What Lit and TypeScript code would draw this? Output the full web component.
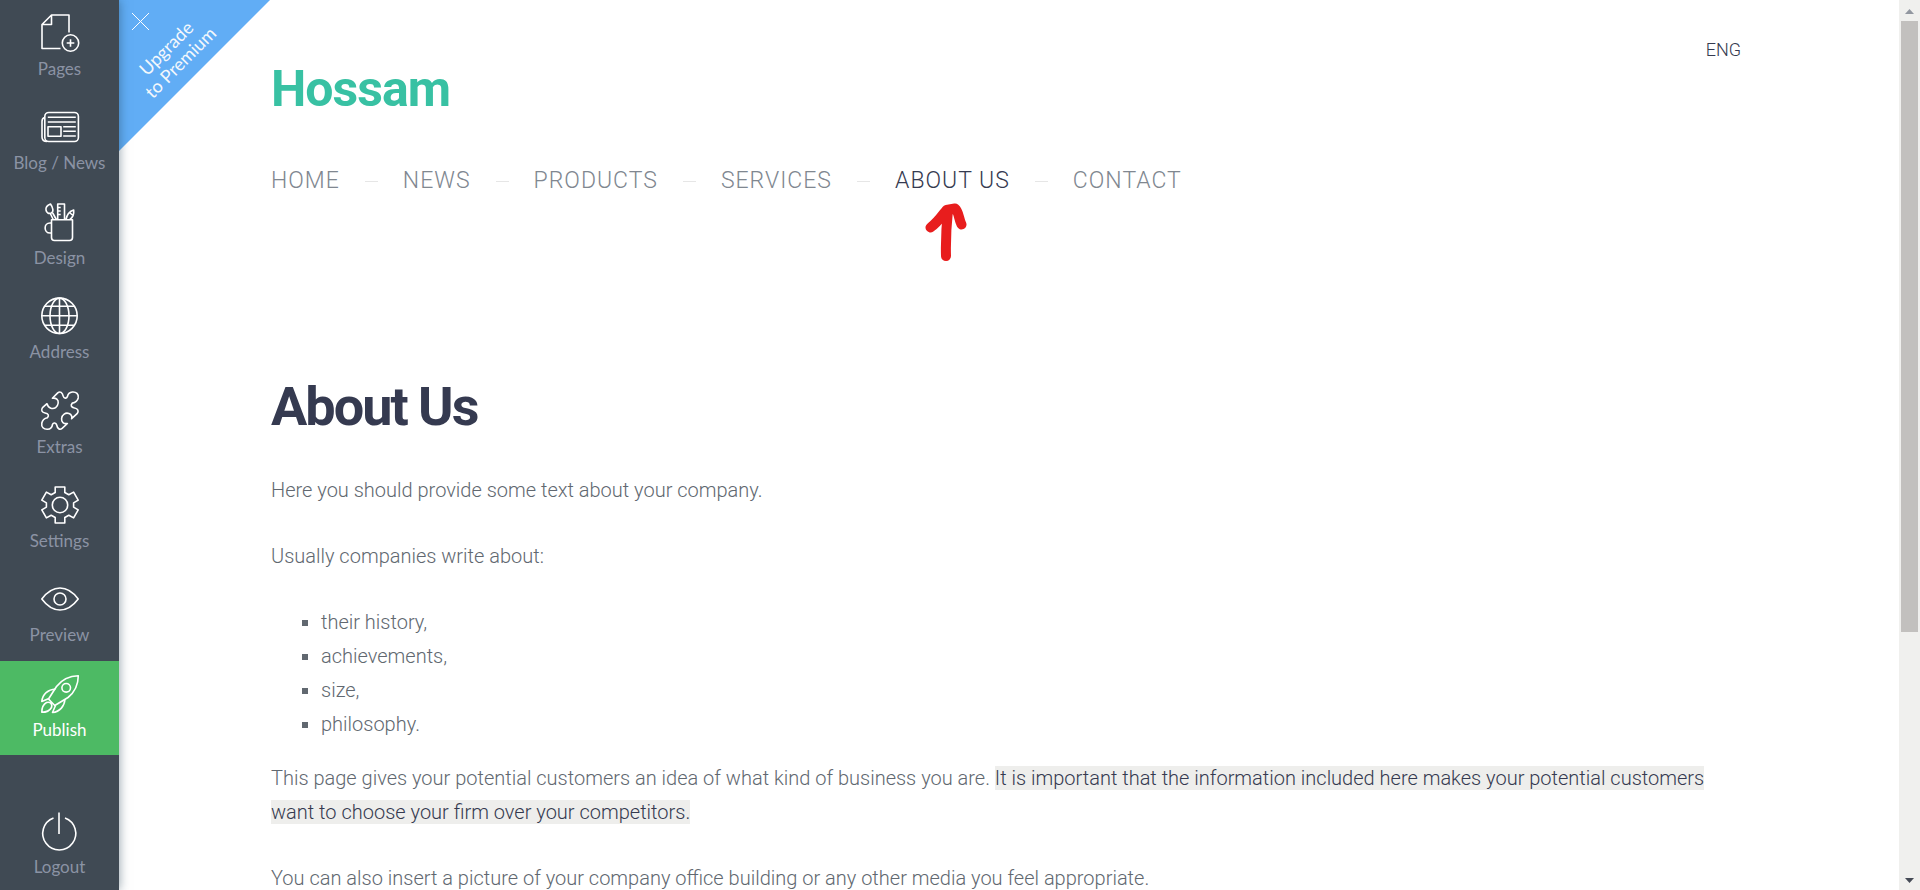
import { LitElement, html, css, svg } from "lit";
import { customElement } from "lit/decorators.js";
import { classMap } from "lit/directives/class-map.js";

const icons = {
  pages: svg`<path d="M19.5 34.5H1V10.5L10.5 1H28V18.5M10.5 1V10.5H1"/><circle cx="29.5" cy="29" r="8.2"/><path d="M29.5 25.2v7.6M25.7 29h7.6"/>`,
  news: svg`<rect x="3.8" y="4.5" width="33.6" height="29" rx="4"/><path d="M3.8 9.5C1.8 10 1 11.3 1 13.5V29c0 3 1.6 4.5 5 4.5M6.8 9.3h28M6.8 14h28M22.2 18.7h12.6M22.2 23.3h12.6M22.2 28h12.6"/><rect x="7" y="18.7" width="13" height="9.6"/>`,
  design: svg`<path d="M10.5 16.7h21v17.8c0 2-1 3-3 3h-15c-2 0-3-1-3-3zM10.500 20H9c-6.500 0-6.500 10 0 10h1.500M16.700 16.500V1h6.800v15.500M16.700 4.500h3M16.700 8h3M16.700 11.500h3M9.500 1C6.500 2.200 4.600 4.500 5 7c.4 2.800 2.800 4 5.300 3C13 8.800 12 4.500 9.500 1zM9.300 10.500l2.900 6M11.700 10l3.600 6.500M25 16.500c1-5 3.500-8.300 7.700-9.500.4 3.800-.8 7.300-3.800 9.500M28.500 9.500l3.500 3"/>`,
  address: svg`<circle cx="18.500" cy="18.800" r="17.700"/><ellipse cx="18.500" cy="18.800" rx="9.500" ry="17.700"/><path d="M18.500 1.100v35.400M.8 18.800h35.400M4 9.300h29M4 28.300h29"/>`,
  extras: svg`<path d="M6 11.700L1.500 15.600C-.2 18 .8 20.500 4 21c3.500.5 4.300 2.500 2.400 4.800C3.500 26.400 1.500 28 .8 31c-.7 4 2 6.500 5.700 6.300 3-.2 4.700-2.300 5-5 1-2 3.500-1.600 4.200.7.600 3.400 3 5.500 5.400 3.400l5.300-4.900c-3.800.6-6.200-1.500-5.800-5 .5-4 3.800-6.200 7.400-5 2.700 1 3.300 3.500 2.600 5.200l5.500-5c2-2.700.9-5.100-2.600-5.700-3.400-.7-4.200-2.700-2.200-4.900 3-.5 5.200-2.200 5.900-5.100.8-4-2-6.300-5.800-6-2.900.3-4.600 2.200-5 4.700-1 2.200-3.600 1.800-4.200-.6-.7-3.400-3-5.400-5.500-3.200L11.400 6.200c3.700-.6 6.200 1.500 5.800 4.800-.5 4-3.800 6.400-7.400 5.200-2.400-.8-3.300-2.700-3.800-4.500z"/>`,
  settings: svg`<circle cx="19" cy="19" r="7.700"/><path d="M14.200 1h9.600v5.500l4 2.300 4.800-2.700 4.600 8-4.600 2.800v4.200l4.600 2.800-4.600 8-4.800-2.700-4 2.300V37h-9.600v-5.500l-4-2.300-4.800 2.700-4.600-8 4.600-2.800v-4.200L.8 14.100l4.600-8 4.800 2.700 4-2.300z"/>`,
  preview: svg`<path d="M.8 19C6 12 12 8 19 8s13 4 18.200 11C32 26 26 30 19 30S6 26 .8 19z"/><circle cx="19" cy="19" r="6"/>`,
  publish: svg`<path d="M37.300.8C28 1 21 4.500 15.500 11.500L7.500 24l6.300 6.500L27 22.500c7-5.500 10.200-12.500 10.300-21.700z"/><circle cx="25.200" cy="12.800" r="4.300"/><path d="M14.500 14C7 14.500 1.500 19 .8 26.500L8 23.500M24 24c-.5 7-5 12.800-12.500 13.500l3-7M5.500 27.500C2 29.500.8 33 .8 37.300c4.300 0 7.700-1.300 9.700-4.800 1.200-4-1.500-6-5-5z"/>`,
  logout: svg`<path d="M18 .5v21.500M12.500 6a16.500 16.500 0 1 0 11.500 0"/>`,
};

type IconName = keyof typeof icons;

const tools: { icon: IconName; label: string }[] = [
  { icon: "pages", label: "Pages" },
  { icon: "news", label: "Blog / News" },
  { icon: "design", label: "Design" },
  { icon: "address", label: "Address" },
  { icon: "extras", label: "Extras" },
  { icon: "settings", label: "Settings" },
  { icon: "preview", label: "Preview" },
  { icon: "publish", label: "Publish" },
];

@customElement("editor-sidebar")
class EditorSidebar extends LitElement {
  static styles = css`
    :host {
      display: flex;
      flex-direction: column;
      background: #404a54;
      box-shadow: 0 0 10px rgba(30, 60, 80, 0.5);
      font-family: Lato, sans-serif;
    }
    .tools {
      flex: 1;
      display: flex;
      flex-direction: column;
    }
    .tool {
      flex: 1;
      display: flex;
      flex-direction: column;
      align-items: center;
      gap: 7px;
      width: 100%;
      margin: 0;
      padding: 14px 0 0;
      border: 0;
      background: none;
      color: #8b93a4;
      font: 400 17px/20px Lato, sans-serif;
      cursor: pointer;
    }
    .publish {
      background: #4dba64;
      color: #fff;
    }
    .logout {
      flex: 0 0 92px;
      margin-top: 43px;
    }
    .icon {
      flex: none;
      width: 38px;
      height: 38px;
      fill: none;
      stroke: #fff;
      stroke-width: 1.6;
      stroke-linejoin: round;
      overflow: visible;
    }
  `;

  private tool(icon: IconName, label: string) {
    return html`<button
      type="button"
      class=${classMap({ tool: true, publish: icon === "publish", logout: icon === "logout" })}
    >
      <svg class="icon" viewBox="0 0 38 38" aria-hidden="true">${icons[icon]}</svg>
      <span>${label}</span>
    </button>`;
  }

  render() {
    return html`
      <nav class="tools" aria-label="Editor">
        ${tools.map((t) => this.tool(t.icon, t.label))}
      </nav>
      ${this.tool("logout", "Logout")}
    `;
  }
}

@customElement("premium-ribbon")
class PremiumRibbon extends LitElement {
  static styles = css`
    :host {
      display: block;
      width: 151px;
      height: 151px;
      background: #61adf5;
      clip-path: polygon(0 0, 100% 0, 0 100%);
    }
    .close {
      position: absolute;
      top: 13px;
      left: 13px;
      width: 17px;
      height: 17px;
      padding: 0;
      border: 0;
      background: none;
      cursor: pointer;
    }
    .cross {
      display: block;
      stroke: #fff;
      stroke-width: 1;
    }
    .upgrade {
      position: absolute;
      top: 35px;
      left: 4px;
      width: 100px;
      transform: rotate(-45deg);
      color: #f4f8fc;
      font: 400 18px/20px Lato, sans-serif;
      text-align: center;
      text-decoration: none;
    }
  `;

  render() {
    return html`
      <button type="button" class="close" aria-label="Close">
        <svg class="cross" width="17" height="17" viewBox="0 0 17 17"><path d="M0 0L17 17M17 0L0 17" /></svg>
      </button>
      <a class="upgrade" href="#premium">Upgrade<br />to Premium</a>
    `;
  }
}

const menu = ["Home", "News", "Products", "Services", "About us", "Contact"];
const topics = ["their history,", "achievements,", "size,", "philosophy."];

@customElement("site-page")
class SitePage extends LitElement {
  static styles = css`
    :host {
      display: block;
      padding: 38px 158px 0 152px;
      background: #fff;
      color: #616870;
      font: 300 20px/34px Roboto, sans-serif;
    }
    .top {
      display: flex;
      align-items: flex-start;
      justify-content: space-between;
    }
    .logo {
      margin-top: 21px;
      color: #38c1a3;
      font-size: 50px;
      font-weight: 700;
      line-height: 60px;
      letter-spacing: -1px;
      text-decoration: none;
    }
    .language {
      color: #353a50;
      font-size: 18px;
      line-height: 24px;
      text-decoration: none;
    }
    .menu {
      display: flex;
      flex-wrap: wrap;
      margin: 46px 0 0;
      padding: 0;
      list-style: none;
      font-size: 23px;
      line-height: 32px;
      letter-spacing: 1px;
      text-transform: uppercase;
    }
    .entry {
      display: flex;
      align-items: center;
    }
    .entry + .entry::before {
      content: "";
      width: 13px;
      height: 1px;
      margin: 0 25px;
      background: #e6e6e6;
    }
    .link {
      position: relative;
      color: #808790;
      text-decoration: none;
    }
    .current {
      color: #353a50;
    }
    .pointer {
      position: absolute;
      top: 36px;
      left: 27px;
      fill: none;
      stroke: #e81d1d;
      stroke-width: 10;
      stroke-linecap: round;
      stroke-linejoin: round;
    }
    .title {
      margin: 178px 0 34px;
      color: #353a50;
      font-size: 54px;
      font-weight: 700;
      line-height: 64px;
      letter-spacing: -2px;
    }
    .text {
      margin: 0 0 32px;
    }
    .topics {
      margin: 0 0 20px;
      padding: 0 0 0 50px;
      list-style: square;
    }
    .mark {
      background: #eeeeec;
      color: #353a50;
    }
  `;

  render() {
    return html`
      <header>
        <div class="top">
          <a class="logo" href="#home">Hossam</a>
          <a class="language" href="#eng">ENG</a>
        </div>
        <nav aria-label="Site">
          <ul class="menu">
            ${menu.map((name) => {
              const current = name === "About us";
              return html`<li class="entry">
                <a class=${classMap({ link: true, current })} href="#${name}"
                  >${name}${current
                    ? html`<svg class="pointer" width="46" height="62" viewBox="0 0 46 62" aria-hidden="true">
                        <path d="M24 55C23.500 37 24 28 26 9M8.500 26.500C15 22 19 16 24.500 9L33 7.500C37 11 36.500 17 39.500 23.500" />
                      </svg>`
                    : null}</a
                >
              </li>`;
            })}
          </ul>
        </nav>
      </header>
      <main>
        <h1 class="title">About Us</h1>
        <p class="text">Here you should provide some text about your company.</p>
        <p class="text">Usually companies write about:</p>
        <ul class="topics">
          ${topics.map((t) => html`<li>${t}</li>`)}
        </ul>
        <p class="text">
          This page gives your potential customers an idea of what kind of business you are.
          <span class="mark"
            >It is important that the information included here makes your potential customers want to choose your firm
            over your competitors.</span
          >
        </p>
        <p class="text">
          You can also insert a picture of your company office building or any other media you feel appropriate.
        </p>
      </main>
    `;
  }
}

@customElement("app-root")
class AppRoot extends LitElement {
  static styles = css`
    :host {
      display: grid;
      grid-template-columns: 119px minmax(0, 1fr) 21px;
      height: 100vh;
      overflow: hidden;
      background: #fff;
    }
    .sidebar {
      position: relative;
      z-index: 2;
    }
    .stage {
      position: relative;
      min-height: 0;
      overflow: hidden;
    }
    .ribbon {
      position: absolute;
      top: 0;
      left: 0;
    }
    .scrollbar {
      display: flex;
      flex-direction: column;
      align-items: center;
      background: #f0f0ee;
    }
    .arrow {
      flex: none;
      display: block;
      fill: #9297a0;
    }
    .down {
      fill: #454a55;
    }
    .track {
      flex: 1;
      width: 17px;
    }
    .thumb {
      height: 72%;
      background: #c2c0be;
    }
  `;

  render() {
    return html`
      <editor-sidebar class="sidebar"></editor-sidebar>
      <div class="stage">
        <site-page></site-page>
        <premium-ribbon class="ribbon"></premium-ribbon>
      </div>
      <div class="scrollbar" aria-hidden="true">
        <svg class="arrow" width="21" height="21" viewBox="0 0 21 21"><path d="M6 14l4.500-5 4.500 5z" /></svg>
        <div class="track"><div class="thumb"></div></div>
        <svg class="arrow down" width="21" height="21" viewBox="0 0 21 21"><path d="M6 9l4.500 5 4.500-5z" /></svg>
      </div>
    `;
  }
}
